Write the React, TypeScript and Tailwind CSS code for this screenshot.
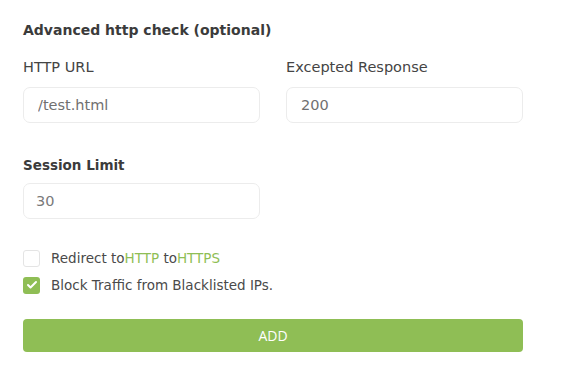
import { Check } from 'lucide-react';

export default function App() {
  return (
    <div className="min-h-screen bg-white px-[23px] pt-[19px] text-[#4a4a4a]" style={{ fontFamily: '"DejaVu Sans", sans-serif' }}>
      <h3 className="text-[14px] font-bold text-[#3b3b3b] leading-[22px]">Advanced http check (optional)</h3>

      <div className="mt-[16px] grid grid-cols-[237px_237px] gap-x-[26px]">
        <div>
          <label className="block text-[14.5px] leading-[21px] text-[#444]">HTTP URL</label>
          <input
            defaultValue="/test.html"
            className="mt-[9px] h-[36px] w-full rounded-[7px] border border-[#ececec] px-[14px] text-[14.5px] text-[#707070] outline-none"
          />
        </div>
        <div>
          <label className="block text-[14.5px] leading-[21px] text-[#444]">Excepted Response</label>
          <input
            defaultValue="200"
            className="mt-[9px] h-[36px] w-full rounded-[7px] border border-[#ececec] px-[14px] text-[14.5px] text-[#707070] outline-none"
          />
        </div>
      </div>

      <div className="mt-[32px] w-[237px]">
        <label className="block text-[13.5px] font-bold leading-[20px] text-[#3b3b3b]">Session Limit</label>
        <input
          defaultValue="30"
          className="mt-[8px] h-[36px] w-full rounded-[7px] border border-[#ececec] px-[12px] text-[14.5px] text-[#7a7a7a] outline-none"
        />
      </div>

      <div className="mt-[29px] flex flex-col gap-[7px]">
        <label className="flex items-center gap-[11px] text-[13.5px] text-[#4a4a4a]">
          <span className="h-[17px] w-[17px] rounded-[3px] border border-[#e4e4e4] bg-white" />
          <span>
            Redirect to<span className="text-[#8fbe55]">HTTP</span> to<span className="text-[#8fbe55]">HTTPS</span>
          </span>
        </label>
        <label className="flex items-center gap-[11px] text-[13.5px] text-[#4a4a4a]">
          <span className="flex h-[17px] w-[17px] items-center justify-center rounded-[3px] bg-[#8fbe55]">
            <Check className="h-[12px] w-[12px] text-white" strokeWidth={4} />
          </span>
          <span>Block Traffic from Blacklisted IPs.</span>
        </label>
      </div>

      <button
        className="mt-[23px] h-[33px] w-[500px] rounded-[4px] bg-[#8fbe55] text-[14px] text-white"
        style={{ fontFamily: '"Open Sans", sans-serif' }}
      >
        ADD
      </button>
    </div>
  );
}
